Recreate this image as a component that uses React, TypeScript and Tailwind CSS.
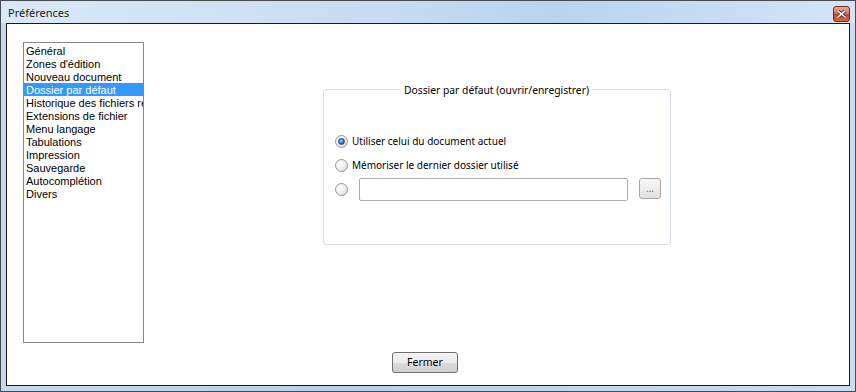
import React from "react";

const items = [
  "Général",
  "Zones d'édition",
  "Nouveau document",
  "Dossier par défaut",
  "Historique des fichiers récents",
  "Extensions de fichier",
  "Menu langage",
  "Tabulations",
  "Impression",
  "Sauvegarde",
  "Autocomplétion",
  "Divers",
];

function Radio({ checked }: { checked?: boolean }) {
  return (
    <div className="relative w-[13px] h-[13px] shrink-0 rounded-full border border-[#979797] bg-[radial-gradient(circle_at_35%_35%,#ffffff_0%,#ebebeb_55%,#d0d0d0_100%)] flex items-center justify-center">
      {checked && (
        <div className="w-[7px] h-[7px] rounded-full border border-[#1f4b74] bg-[radial-gradient(circle_at_40%_35%,#a6dcff_0%,#2d8ad8_45%,#0b3f7c_100%)]" />
      )}
    </div>
  );
}

export default function App() {
  return (
    <div
      className="w-[856px] h-[392px] border border-[#454b52] bg-[linear-gradient(90deg,#c4d9ef_0%,#b8d0ea_40%,#c9ddf2_100%)] flex flex-col text-black"
      style={{ fontFamily: '"Noto Sans", "Open Sans", sans-serif' }}
    >
      <div className="h-[22px] shrink-0 flex items-center justify-between pl-[7px] pr-[5px] bg-[linear-gradient(90deg,#dbe8f6_0%,#c7dcf1_45%,#b9d3ee_65%,#d4e5f7_100%)]">
        <span className="text-[11px] leading-none text-[#1b1b1b] pt-[1px]">Préférences</span>
        <div className="w-[17px] h-[16px] mt-[4px] rounded-[3px] border border-[#6b3128] bg-[linear-gradient(180deg,#eaa898_0%,#d8765f_45%,#c1442b_55%,#d8664a_100%)] flex items-center justify-center">
          <svg width="9" height="8" viewBox="0 0 9 8">
            <path d="M1 1 L8 7 M8 1 L1 7" stroke="#3a2a28" strokeWidth="3" strokeLinecap="square" />
            <path d="M1 1 L8 7 M8 1 L1 7" stroke="#ffffff" strokeWidth="1.6" strokeLinecap="square" />
          </svg>
        </div>
      </div>
      <div className="flex-1 mx-[5px] mb-[5px] border border-[#1a1a1a] bg-white flex flex-col pl-[16px] pt-[18px]">
        <div className="flex items-start">
          <div
            className="w-[121px] h-[301px] border border-[#828790] bg-white overflow-hidden pt-[1px]"
            style={{ fontFamily: '"Liberation Sans", Arial, sans-serif' }}
          >
            {items.map((it, i) => (
              <div
                key={it}
                className={
                  "h-[13px] leading-[15px] text-[11px] pl-[2px] whitespace-nowrap overflow-hidden " +
                  (i === 3 ? "bg-[#3399ff] text-white" : "text-black")
                }
              >
                {it}
              </div>
            ))}
          </div>
          <div className="relative ml-[179px] mt-[47px] w-[348px] h-[156px] border border-[#d5dfe5] rounded-[3px] flex flex-col pt-[43px] pl-[11px] text-[10px]">
            <span className="absolute left-[77px] top-[-6px] bg-white px-[3px] leading-[13px] text-[10.3px] text-black">
              Dossier par défaut (ouvrir/enregistrer)
            </span>
            <div className="flex items-center h-[16px]">
              <Radio checked />
              <span className="ml-[4px] leading-[14px]">Utiliser celui du document actuel</span>
            </div>
            <div className="flex items-center h-[16px] mt-[8px]">
              <Radio />
              <span className="ml-[4px] leading-[14px]">Mémoriser le dernier dossier utilisé</span>
            </div>
            <div className="flex items-center h-[23px] mt-[5px]">
              <Radio />
              <div className="ml-[11px] w-[269px] h-[23px] border border-[#abadb3] rounded-[2px] bg-white" />
              <div className="ml-[11px] -mt-[2px] w-[22px] h-[21px] border border-[#a8a8a8] rounded-[3px] bg-[linear-gradient(180deg,#f6f6f6_0%,#ededed_50%,#e2e2e2_100%)] flex items-center justify-center text-[10px] text-[#6d6d6d] leading-none pb-[1px]">
                ...
              </div>
            </div>
          </div>
        </div>
        <div className="ml-[369px] mt-[9px] w-[66px] h-[21px] border border-[#707070] rounded-[3px] bg-[linear-gradient(180deg,#f2f2f2_0%,#ebebeb_50%,#dddddd_51%,#cfcfcf_100%)] flex items-center justify-center text-[10.5px] leading-none">
          Fermer
        </div>
      </div>
    </div>
  );
}
